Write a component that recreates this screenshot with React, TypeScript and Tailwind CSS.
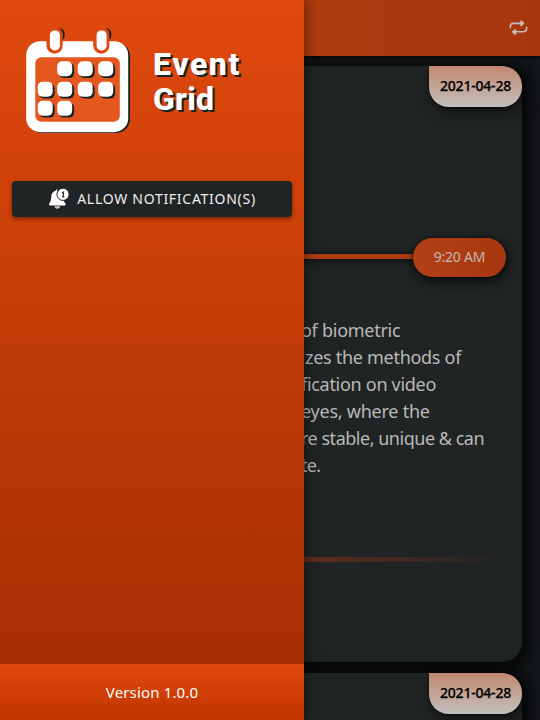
import React from "react";

function RepeatIcon() {
  return (
    <svg width="20" height="20" viewBox="0 0 20 20" fill="none" stroke="#c4bcb8" strokeWidth="1.6" strokeLinecap="round" strokeLinejoin="round">
      <path d="M2.3 9.600V8.6C2.300 6.500 3.400 5.400 5.400 5.400h9.400M13 3.200l2.600 2.200L13 7.600zM18.600 9.400v1.200c0 2.100-1.200 3.200-3.200 3.200H5.800M7.400 11.800 4.800 13.900l2.600 2.200z" />
    </svg>
  );
}

const days = [
  [57.5, 61.5], [78, 61.5], [98.5, 61.5],
  [38, 82], [57.5, 82], [78, 82], [98.5, 82],
  [38, 101], [57.5, 101],
];

function CalendarLogo() {
  return (
    <svg width="110" height="112" viewBox="23 24 110 112" className="shrink-0">
      <rect x="28" y="42.5" width="102" height="90.5" rx="14" fill="#182124" />
      <rect x="26.2" y="41.2" width="102" height="91" rx="14" fill="#fff" />
      <rect x="35.3" y="57.2" width="84.5" height="64.6" rx="6" fill="#e4571f" />
      {[48.5, 95.2].map((x) => (
        <g key={x}>
          <rect x={x} y="28" width="16.2" height="13.2" rx="6" fill="#182124" />
          <rect x={x - 2} y="26.7" width="16.2" height="27" rx="8.1" fill="#e0490e" />
          <rect x={x + 1.4} y="30.4" width="10" height="20" rx="4.6" fill="#fff" />
        </g>
      ))}
      {days.map(([x, y]) => (
        <g key={`${x}-${y}`}>
          <rect x={x + 1.6} y={y + 1.6} width="15" height="15" rx="5" fill="#182124" />
          <rect x={x - 0.3} y={y - 0.3} width="15" height="15" rx="5" fill="#fff" />
        </g>
      ))}
    </svg>
  );
}

function BellIcon() {
  return (
    <svg width="22" height="22" viewBox="0 0 22 22" className="shrink-0">
      <path d="M9.3 1.2c-1 0-1.4.7-1.5 1.4C4.8 3.7 3.4 5.8 3.3 8.8c-.1 3.5-.9 5.2-2 6.6-.8 1-.2 2 1 2h14c1.300 0 1.800-1 1-2-1-1.300-1.500-2.400-1.800-4L9 3z" fill="#fff" />
      <path d="M6.300 18.300h6c-.4 1.500-1.500 2.400-3 2.400s-2.600-.9-3-2.400z" fill="#ccc" />
      <circle cx="15" cy="6.300" r="6.100" fill="#fff" stroke="#212425" strokeWidth="1" />
      <path d="M14 5.100 15.300 4.200v4.600M14.200 8.800h2.200" fill="none" stroke="#212425" strokeWidth="1.200" />
    </svg>
  );
}

function DateBadge() {
  return (
    <div className="ml-auto flex h-[41px] w-[93px] items-center justify-center rounded-[20px] rounded-tl-none bg-linear-to-b from-[#c28870] to-[#c1bfbe] pb-[3px] text-[14px] font-medium tracking-[-0.2px] text-black shadow-[0_0_2px_#000,3px_5px_14px_rgba(0,0,0,0.6)] [-webkit-text-stroke:0.25px_black]">
      <span className="whitespace-nowrap">2021-04-28</span>
    </div>
  );
}

function Feed() {
  return (
    <div className="flex h-full flex-col bg-[#141719]">
      <header className="z-10 flex h-14 shrink-0 items-center justify-end bg-linear-to-r from-[#ae3b0d] from-55% to-[#a7370f] pr-[12px] shadow-[0_1px_3px_#000]">
        <RepeatIcon />
      </header>
      <main className="flex flex-col gap-[11px] pt-[10px] pr-[18px]">
        <article className="h-[596px] rounded-r-[20px] bg-[#212425] shadow-[3px_3px_15px_4px_#050607]">
          <DateBadge />
          <div className="mt-[131px] flex h-[39px] items-center pr-4">
            <div className="mb-[2px] h-[5px] flex-1 bg-[#ad3d12] shadow-[0_0_2px_#000,0_2px_8px_rgba(0,0,0,0.6)]" />
            <div className="z-10 flex h-[39px] w-[93px] items-center justify-center rounded-full bg-linear-to-r from-[#b24017] to-[#a7370f] pb-[3px] text-[14px] tracking-[-0.2px] text-[#c4b7b0] shadow-[2px_4px_12px_#080909,0_0_2px_#000]">
              9:20 AM
            </div>
          </div>
          <div className="mt-[40px] pl-[301px] text-[18px] leading-[27px] whitespace-nowrap text-[#b9b9b8]">
            <p className="tracking-[-0.27px]">of biometric</p>
            <p className="pl-[4px] tracking-[-0.29px]">zes the methods of</p>
            <p className="tracking-[-0.29px]">fication on video</p>
            <p className="tracking-[-0.24px]">eyes, where the</p>
            <p className="tracking-[-0.48px]">re stable, unique &amp; can</p>
            <p className="tracking-[-0.65px]">te.</p>
          </div>
          <div className="mt-[78px] mr-[18px] ml-[304px] h-[5px] bg-linear-to-r from-[#5e2d1d] to-transparent" />
        </article>
        <article className="h-[596px] rounded-r-[20px] bg-[#212425] shadow-[3px_3px_15px_4px_#050607]">
          <DateBadge />
        </article>
      </main>
    </div>
  );
}

function Drawer() {
  return (
    <aside className="absolute inset-y-0 left-0 z-20 flex w-[304px] flex-col bg-linear-to-b from-[#e0490e] to-[#a12d03] shadow-[0_0_14px_rgba(0,0,0,0.55)]">
      <div className="flex h-[181px] items-start pt-6 pl-[23px]">
        <CalendarLogo />
        <h1 className="ml-[20px] pt-[23px] font-[Roboto,sans-serif] text-[32px] leading-[35px] font-extrabold text-white [text-shadow:2px_2px_0_#182124]">
          <span className="block tracking-[1.6px]">Event</span>
          <span className="block tracking-[0.2px]">Grid</span>
        </h1>
      </div>
      <button className="mx-3 flex h-[36px] items-center justify-center gap-[7px] rounded-[4px] bg-[#212425] text-[14px] tracking-[0.72px] whitespace-nowrap text-[#eee] shadow-[0_2px_4px_rgba(0,0,0,0.4)]">
        <BellIcon />
        <span className="pb-px">ALLOW NOTIFICATION(S)</span>
      </button>
      <footer className="mt-auto flex h-[56px] items-center justify-center bg-linear-to-b from-[#e0490e] to-[#c03500] text-[15px] tracking-[0.15px] text-white">
        Version 1.0.0
      </footer>
    </aside>
  );
}

export default function App() {
  return (
    <div className="relative h-[720px] w-[540px] overflow-hidden font-['Noto_Sans',sans-serif]">
      <Feed />
      <Drawer />
    </div>
  );
}
